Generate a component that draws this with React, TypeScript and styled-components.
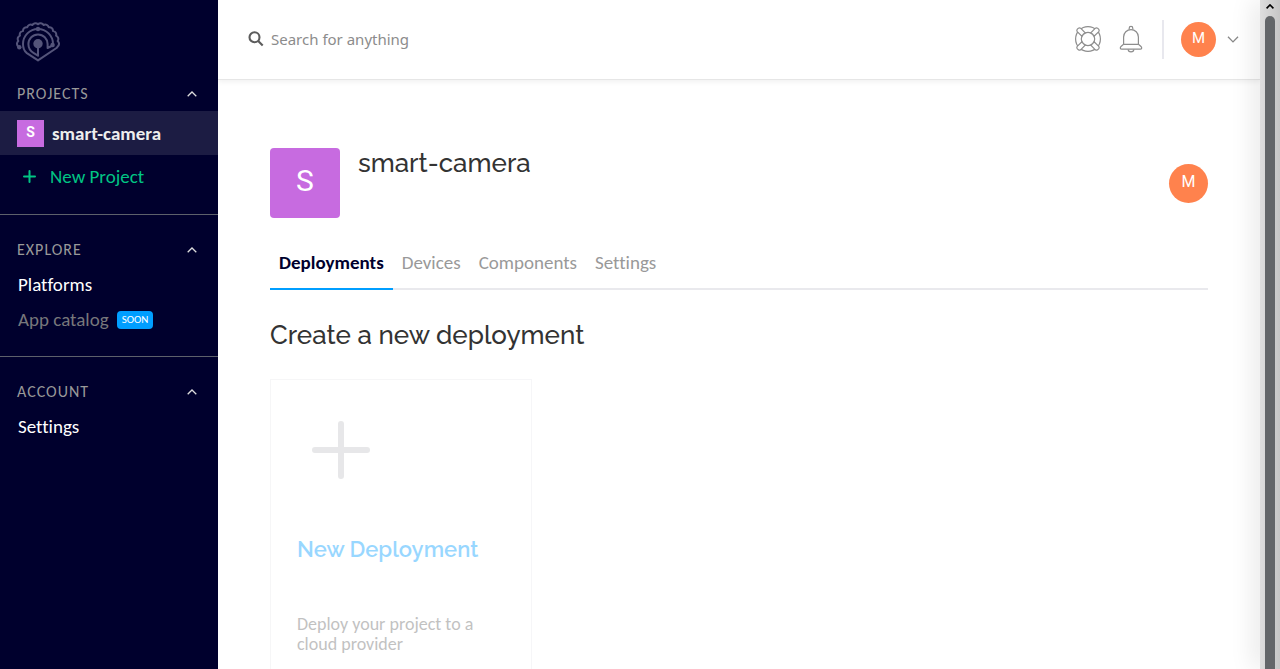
import React from "react";
import styled, { createGlobalStyle, css } from "styled-components";

const GlobalStyle = createGlobalStyle`
  *, *::before, *::after { box-sizing: border-box; }
  body {
    margin: 0;
    background: #fff;
    font-family: Carlito, Lato, "Liberation Sans", sans-serif;
    font-variant-ligatures: none;
  }
  h1, h2, h3, p, ul { margin: 0; padding: 0; }
  ul { list-style: none; }
  button { font: inherit; font-variant-ligatures: inherit; border: 0; background: none; padding: 0; cursor: pointer; }
  a { text-decoration: none; color: inherit; }
`;

const headingFont = css`
  font-family: Raleway, Lato, "Liberation Sans", sans-serif;
`;

const Shell = styled.div`
  display: flex;
  height: 100vh;
  overflow: hidden;
`;

const Sidebar = styled.nav`
  flex: 0 0 218px;
  background: #00002d;
  color: #fff;
`;

const LogoLink = styled.a`
  display: block;
  height: 62px;
  padding: 22px 0 0 16px;
  margin-bottom: 20px;
  svg { display: block; }
`;

const NavSection = styled.section`
  & + & {
    border-top: 1px solid #5d606b;
    padding-top: 23px;
  }
`;

const SectionToggle = styled.button`
  display: flex;
  align-items: center;
  justify-content: space-between;
  width: 100%;
  height: 24px;
  padding: 0 21px 0 17px;
  color: #999;
  font-size: 16px;
  line-height: 20px;
  letter-spacing: 1px;
  text-transform: uppercase;
  svg { color: #ddd; }
`;

const NavList = styled.ul<{ $space: number }>`
  padding: 5px 0 ${(p) => p.$space}px;
`;

const NavLink = styled.a<{ $muted?: boolean }>`
  display: flex;
  align-items: center;
  height: 35px;
  padding: 1px 0 0 18px;
  font-size: 19px;
  line-height: 22px;
  color: ${(p) => (p.$muted ? "#77777b" : "#fff")};
`;

const ProjectLink = styled.a`
  display: flex;
  align-items: center;
  gap: 8px;
  height: 44px;
  padding-left: 17px;
  background: #1c1c43;
  color: #eee;
  font-size: 19px;
  font-weight: 700;
`;

const NewProject = styled.button`
  display: flex;
  align-items: center;
  gap: 14px;
  width: 100%;
  height: 43px;
  padding-left: 23px;
  color: #00c584;
  font-size: 19px;
`;

const SoonBadge = styled.span`
  margin-left: 8px;
  padding: 0 5px;
  border-radius: 4px;
  background: #009eff;
  color: #fff;
  font-size: 11px;
  line-height: 18px;
`;

const Initial = styled.span<{ $size: number; $font: number; $round?: boolean; $bold?: boolean }>`
  display: flex;
  flex: none;
  align-items: center;
  justify-content: center;
  width: ${(p) => p.$size}px;
  height: ${(p) => p.$size}px;
  padding-bottom: ${(p) => (p.$size > 60 ? 6 : 3)}px;
  border-radius: ${(p) => (p.$round ? "50%" : p.$size > 60 ? "4px" : "0")};
  background: ${(p) => (p.$round ? "#ff824d" : "#c76be0")};
  color: #fff;
  font-family: Roboto, "Liberation Sans", sans-serif;
  font-size: ${(p) => p.$font}px;
  font-weight: ${(p) => (p.$bold ? 700 : 400)};
`;

const Page = styled.div`
  flex: 1;
  min-width: 0;
  background: #fff;
`;

const TopBar = styled.header`
  display: flex;
  align-items: center;
  height: 80px;
  padding: 0 21px 0 30px;
  border-bottom: 1px solid #e6e6e6;
  box-shadow: 0 2px 5px rgba(0, 0, 0, 0.06);
`;

const Search = styled.label`
  display: flex;
  flex: 1;
  align-items: center;
  gap: 7px;
  padding-bottom: 2px;
`;

const SearchInput = styled.input`
  flex: 1;
  min-width: 0;
  padding: 0;
  border: 0;
  outline: 0;
  background: none;
  font-family: "Noto Sans", sans-serif;
  font-size: 15px;
  color: #333;
  &::placeholder { color: #8c8c8c; opacity: 1; }
`;

const Tools = styled.div`
  display: flex;
  align-items: center;
`;

const IconButton = styled.button`
  width: 28px;
  height: 30px;
  padding-bottom: 2px;
  margin-right: 15px;
  color: #8d8d8d;
  svg { display: block; }
`;

const AccountButton = styled.button`
  display: flex;
  align-items: center;
  gap: 11px;
  margin-left: 2px;
  padding-left: 17px;
  height: 39px;
  border-left: 2px solid #e8e8ee;
  color: #888;
`;

const Content = styled.main`
  padding: 68px 52px 0;
`;

const ProjectHeader = styled.div`
  display: flex;
  height: 70px;
  gap: 18px;
`;

const Title = styled.h1`
  ${headingFont}
  flex: 1;
  font-size: 26px;
  line-height: 30px;
  font-weight: 500;
  color: #333;
`;

const Member = styled.div`
  align-self: center;
`;

const Tabs = styled.nav`
  display: flex;
  height: 72px;
  border-bottom: 2px solid #e9e9ed;
`;

const Tab = styled.a<{ $active?: boolean }>`
  height: 72px;
  padding: 34px 9px 0;
  font-size: 19px;
  line-height: 22px;
  color: #999;
  ${(p) =>
    p.$active &&
    css`
      font-weight: 700;
      color: #00002d;
      border-bottom: 2px solid #009eff;
    `}
`;

const SectionTitle = styled.h2`
  ${headingFont}
  margin: 30px 0 28px;
  font-size: 26px;
  line-height: 31px;
  font-weight: 500;
  color: #333;
`;

const Card = styled.button`
  display: flex;
  flex-direction: column;
  width: 262px;
  padding: 41px 26px 40px;
  border: 1px solid #e9e9ed;
  opacity: 0.4;
  text-align: left;
  svg { margin-left: 15px; }
`;

const CardTitle = styled.span`
  ${headingFont}
  margin-top: 56px;
  font-size: 22px;
  line-height: 28px;
  font-weight: 600;
  color: #009eff;
`;

const CardText = styled.span`
  margin-top: 51px;
  font-size: 18px;
  line-height: 20px;
  color: #666;
`;

const ScrollTrack = styled.div`
  position: relative;
  flex: 0 0 20px;
  display: flex;
  flex-direction: column;
  align-items: center;
  padding-top: 4px;
  gap: 7px;
  background: linear-gradient(90deg, #dedede, #c6c6c6);
  box-shadow: -6px 0 24px rgba(0, 0, 0, 0.1);
`;

const ScrollThumb = styled.div`
  flex: 1;
  width: 10px;
  border-radius: 5px 5px 0 0;
  background: #636669;
`;

const Chevron = ({ up, size = 10, weight = 1.3 }: { up?: boolean; size?: number; weight?: number }) => (
  <svg width={size} height={size / 2 + 1} viewBox="0 0 10 6" fill="none" stroke="currentColor" strokeWidth={weight} aria-hidden="true">
    <path d={up ? "M.7 5.3 5 1l4.3 4.3" : "M.7.7 5 5 9.3.7"} />
  </svg>
);

const scallops = () => {
  const point = (deg: number) => {
    const a = (deg * Math.PI) / 180;
    return `${(22 + 19.9 * Math.cos(a)).toFixed(2)} ${(21.8 - 19.6 * Math.sin(a)).toFixed(2)}`;
  };
  const steps = 12;
  let d = `M3.2 25L${point(188)}`;
  for (let i = 1; i <= steps; i++) d += `A3.6 3.6 0 0 1 ${point(188 - (i * 196) / steps)}`;
  return d;
};

const Logo = () => (
  <svg width="44" height="40" viewBox="0 0 44 40" fill="none" stroke="#54547a" strokeWidth="2" strokeLinejoin="round" aria-hidden="true">
    <path d={`${scallops()}L40.5 26 22 38.4 10.5 30.8C7.8 28.4 7 25.4 7 22a15 15 0 0 1 30 0v2`} />
    <path d="M36.5 23.5 31.6 26V22a9.6 9.6 0 0 0-19.2 0c0 4.4 2.4 7.4 5.4 9.2l4.2 2.5V22" />
    <g fill="#54547a" stroke="none">
      <circle cx="22" cy="21.7" r="4.7" />
      <circle cx="22" cy="7" r="2.2" />
      <circle cx="3.3" cy="25.2" r="2.2" />
      <circle cx="36.6" cy="23" r="2.2" />
    </g>
  </svg>
);

const LifeBuoy = () => (
  <svg width="28" height="28" viewBox="0 0 28 28" fill="none" stroke="currentColor" strokeWidth="1.2" aria-hidden="true">
    <circle cx="14" cy="14" r="12.4" />
    <circle cx="14" cy="14" r="6.7" />
    {[0, 90, 180, 270].map((r) => (
      <g key={r} transform={`rotate(${r} 14 14)`}>
        <path fill="#fff" d="M3.2 6.6Q2.4 5.6 3.2 4.4L4.4 3.2Q5.6 2.4 6.6 3.2L11.2 7.9Q9 9 7.9 11.2Z" />
      </g>
    ))}
  </svg>
);

const Bell = () => (
  <svg width="28" height="28" viewBox="0 0 28 28" fill="none" stroke="currentColor" strokeWidth="1.2" aria-hidden="true">
    <path d="M12.2 4.6V3.2a1.8 1.8 0 0 1 3.6 0v1.4" />
    <path d="M6.6 19.3V12a7.4 7.4 0 0 1 14.8 0v7.3l2.6 2.2c1.2 1.1.8 2.7-.8 2.7H4.8c-1.6 0-2-1.6-.8-2.7z" />
    <path d="M6.6 19.4h14.8M11.2 24.4a2.8 2.4 0 0 0 5.6 0" />
  </svg>
);

const Plus = ({ size, width }: { size: number; width: number }) => (
  <svg width={size} height={size} viewBox={`0 0 ${size} ${size}`} stroke="currentColor" strokeWidth={width} strokeLinecap="round" aria-hidden="true">
    <path d={`M${width / 2} ${size / 2}H${size - width / 2}M${size / 2} ${width / 2}V${size - width / 2}`} />
  </svg>
);

const BigPlus = styled.span`
  height: 58px;
  color: #c4c5c9;
`;

const SectionHeader = ({ children }: { children: string }) => (
  <SectionToggle aria-expanded="true">
    {children}
    <Chevron up />
  </SectionToggle>
);

export default function App() {
  return (
    <>
      <GlobalStyle />
      <Shell>
        <Sidebar>
          <LogoLink href="#" aria-label="Home">
            <Logo />
          </LogoLink>
          <NavSection>
            <SectionHeader>Projects</SectionHeader>
            <NavList $space={16}>
              <li>
                <ProjectLink href="#">
                  <Initial $size={27} $font={14} $bold>S</Initial>
                  smart-camera
                </ProjectLink>
              </li>
              <li>
                <NewProject>
                  <Plus size={13} width={2} />
                  New Project
                </NewProject>
              </li>
            </NavList>
          </NavSection>
          <NavSection>
            <SectionHeader>Explore</SectionHeader>
            <NavList $space={19}>
              <li><NavLink href="#">Platforms</NavLink></li>
              <li>
                <NavLink href="#" $muted>
                  App catalog
                  <SoonBadge>SOON</SoonBadge>
                </NavLink>
              </li>
            </NavList>
          </NavSection>
          <NavSection>
            <SectionHeader>Account</SectionHeader>
            <NavList $space={16}>
              <li><NavLink href="#">Settings</NavLink></li>
            </NavList>
          </NavSection>
        </Sidebar>

        <Page>
          <TopBar>
            <Search>
              <svg width="16" height="16" viewBox="0 0 16 16" fill="none" stroke="#5c5c5c" strokeWidth="2.1" aria-hidden="true">
                <circle cx="6.5" cy="6.3" r="5" />
                <path d="m10.2 10 4.5 4.6" />
              </svg>
              <SearchInput type="text" placeholder="Search for anything" aria-label="Search for anything" />
            </Search>
            <Tools>
              <IconButton aria-label="Help"><LifeBuoy /></IconButton>
              <IconButton aria-label="Notifications"><Bell /></IconButton>
              <AccountButton aria-label="Account menu">
                <Initial $size={35} $font={15} $round>M</Initial>
                <Chevron size={12} weight={1.1} />
              </AccountButton>
            </Tools>
          </TopBar>

          <Content>
            <ProjectHeader>
              <Initial $size={70} $font={30}>S</Initial>
              <Title>smart-camera</Title>
              <Member>
                <Initial $size={39} $font={16} $round>M</Initial>
              </Member>
            </ProjectHeader>
            <Tabs>
              <Tab href="#" $active>Deployments</Tab>
              <Tab href="#">Devices</Tab>
              <Tab href="#">Components</Tab>
              <Tab href="#">Settings</Tab>
            </Tabs>
            <SectionTitle>Create a new deployment</SectionTitle>
            <Card>
              <BigPlus><Plus size={58} width={6} /></BigPlus>
              <CardTitle>New Deployment</CardTitle>
              <CardText>Deploy your project to a cloud provider</CardText>
            </Card>
          </Content>
        </Page>

        <ScrollTrack aria-hidden="true">
          <Chevron up size={8} weight={2} />
          <ScrollThumb />
        </ScrollTrack>
      </Shell>
    </>
  );
}
